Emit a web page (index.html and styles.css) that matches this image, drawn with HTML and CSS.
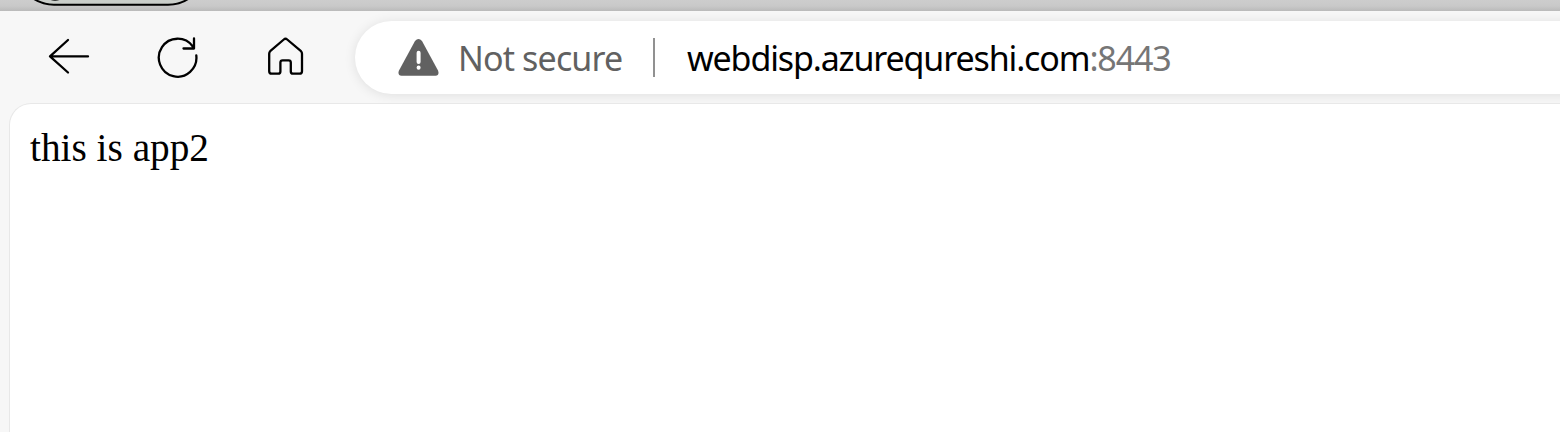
FILE: index.html
```html
<!DOCTYPE html>
<html lang="en">
<head>
<meta charset="utf-8">
<title>webdisp.azurequreshi.com:8443</title>
<link rel="stylesheet" href="styles.css">
</head>
<body>
<div class="tabstrip">
  <svg class="tab-outline" width="170" height="11" viewBox="30 0 170 11" fill="none" stroke="#000" stroke-width="2">
    <path d="M34-1Q43 4.700 54 4.700H168Q180 4.700 188-1" fill="#c8d0c8" fill-opacity=".45"/>
    <path d="M49-1.500Q55 1.600 61-1.500" stroke-width="1.500"/>
  </svg>
</div>
<div class="toolbar">
  <div class="actions">
    <svg class="icon" width="44" height="44" viewBox="47 35 44 44"><path d="M68 40 50 56.400 68 72.500M50 56.400H88"/></svg>
    <svg class="icon" width="44" height="44" viewBox="155.500 35.500 44 44"><path d="M195.800 56A18.800 19 0 1 1 192.300 47M193.500 39V49H183"/></svg>
    <svg class="icon" width="44" height="44" viewBox="264 35 44 44"><path d="M283.800 39.500Q285.500 38 287.200 39.500L301 51.200Q302 52.200 302 53.800V71.200Q302 73.700 299.500 73.700H293Q290.800 73.700 290.800 71.500V62.500Q290.800 60.300 288.600 60.300H282.600Q280.400 60.300 280.400 62.500V71.500Q280.400 73.700 278.200 73.700H271.700Q269.200 73.700 269.200 71.200V53.800Q269.200 52.200 270.200 51.200Z"/></svg>
  </div>
  <div class="address">
    <svg class="warning" width="42" height="38" viewBox="397 37 42 38"><path fill="#616161" d="M415 40Q418.500 36 422 40L438 69.500Q439.800 74.400 435.500 74.700H401.500Q397.200 74.400 399 69.500Z"/><path fill="none" stroke="#fff" stroke-width="4" stroke-linecap="round" d="M418.600 51.700V61M418.600 66.600V66.700"/></svg>
    <span class="security">Not secure</span>
    <span class="divider"></span>
    <span class="url">webdisp.azurequreshi.com<span class="port">:8443</span></span>
  </div>
</div>
<main class="page">this is app2</main>
</body>
</html>
```
FILE: styles.css
```css
* { box-sizing: border-box; }
body {
  margin: 0;
  height: 432px;
  overflow: hidden;
  display: flex;
  flex-direction: column;
  background: #f7f7f7;
}
svg { display: block; flex: none; }
.tabstrip {
  height: 11px;
  flex: none;
  padding-left: 30px;
  background: linear-gradient(#cdcdcd 0, #c9c9c9 6px, #bababa 11px);
}
.toolbar {
  height: 92px;
  flex: none;
  display: flex;
  padding-top: 10px;
  overflow: hidden;
}
.actions {
  width: 355px;
  flex: none;
  display: flex;
  gap: 64.500px;
  padding: 14px 0 0 47px;
}
.icon {
  fill: none;
  stroke: #000;
  stroke-width: 2.300;
  stroke-linecap: round;
  stroke-linejoin: round;
}
.address {
  flex: 1;
  height: 73px;
  display: flex;
  align-items: center;
  padding-left: 42px;
  margin-right: -60px;
  border-radius: 37px;
  background: #fff;
  box-shadow: 0 1px 12px rgba(0, 0, 0, .1);
  font: 34px/48px "Noto Sans", sans-serif;
  white-space: nowrap;
}
.warning { margin-bottom: 2px; }
.security {
  width: 195px;
  margin-left: 19px;
  color: #616161;
  letter-spacing: -.85px;
}
.divider {
  width: 2px;
  height: 39px;
  background: #919191;
}
.url {
  margin-left: 32px;
  color: #000;
  letter-spacing: -1.140px;
}
.port { color: #767676; }
.page {
  flex: 1;
  margin-left: 9px;
  padding: 21px 0 0 20px;
  border: solid #e8e8e8;
  border-width: 1px 0 0 1px;
  border-radius: 22px 0 0;
  background: #fff;
  color: #000;
  font: 39.300px/46px "Liberation Serif", serif;
}
```
